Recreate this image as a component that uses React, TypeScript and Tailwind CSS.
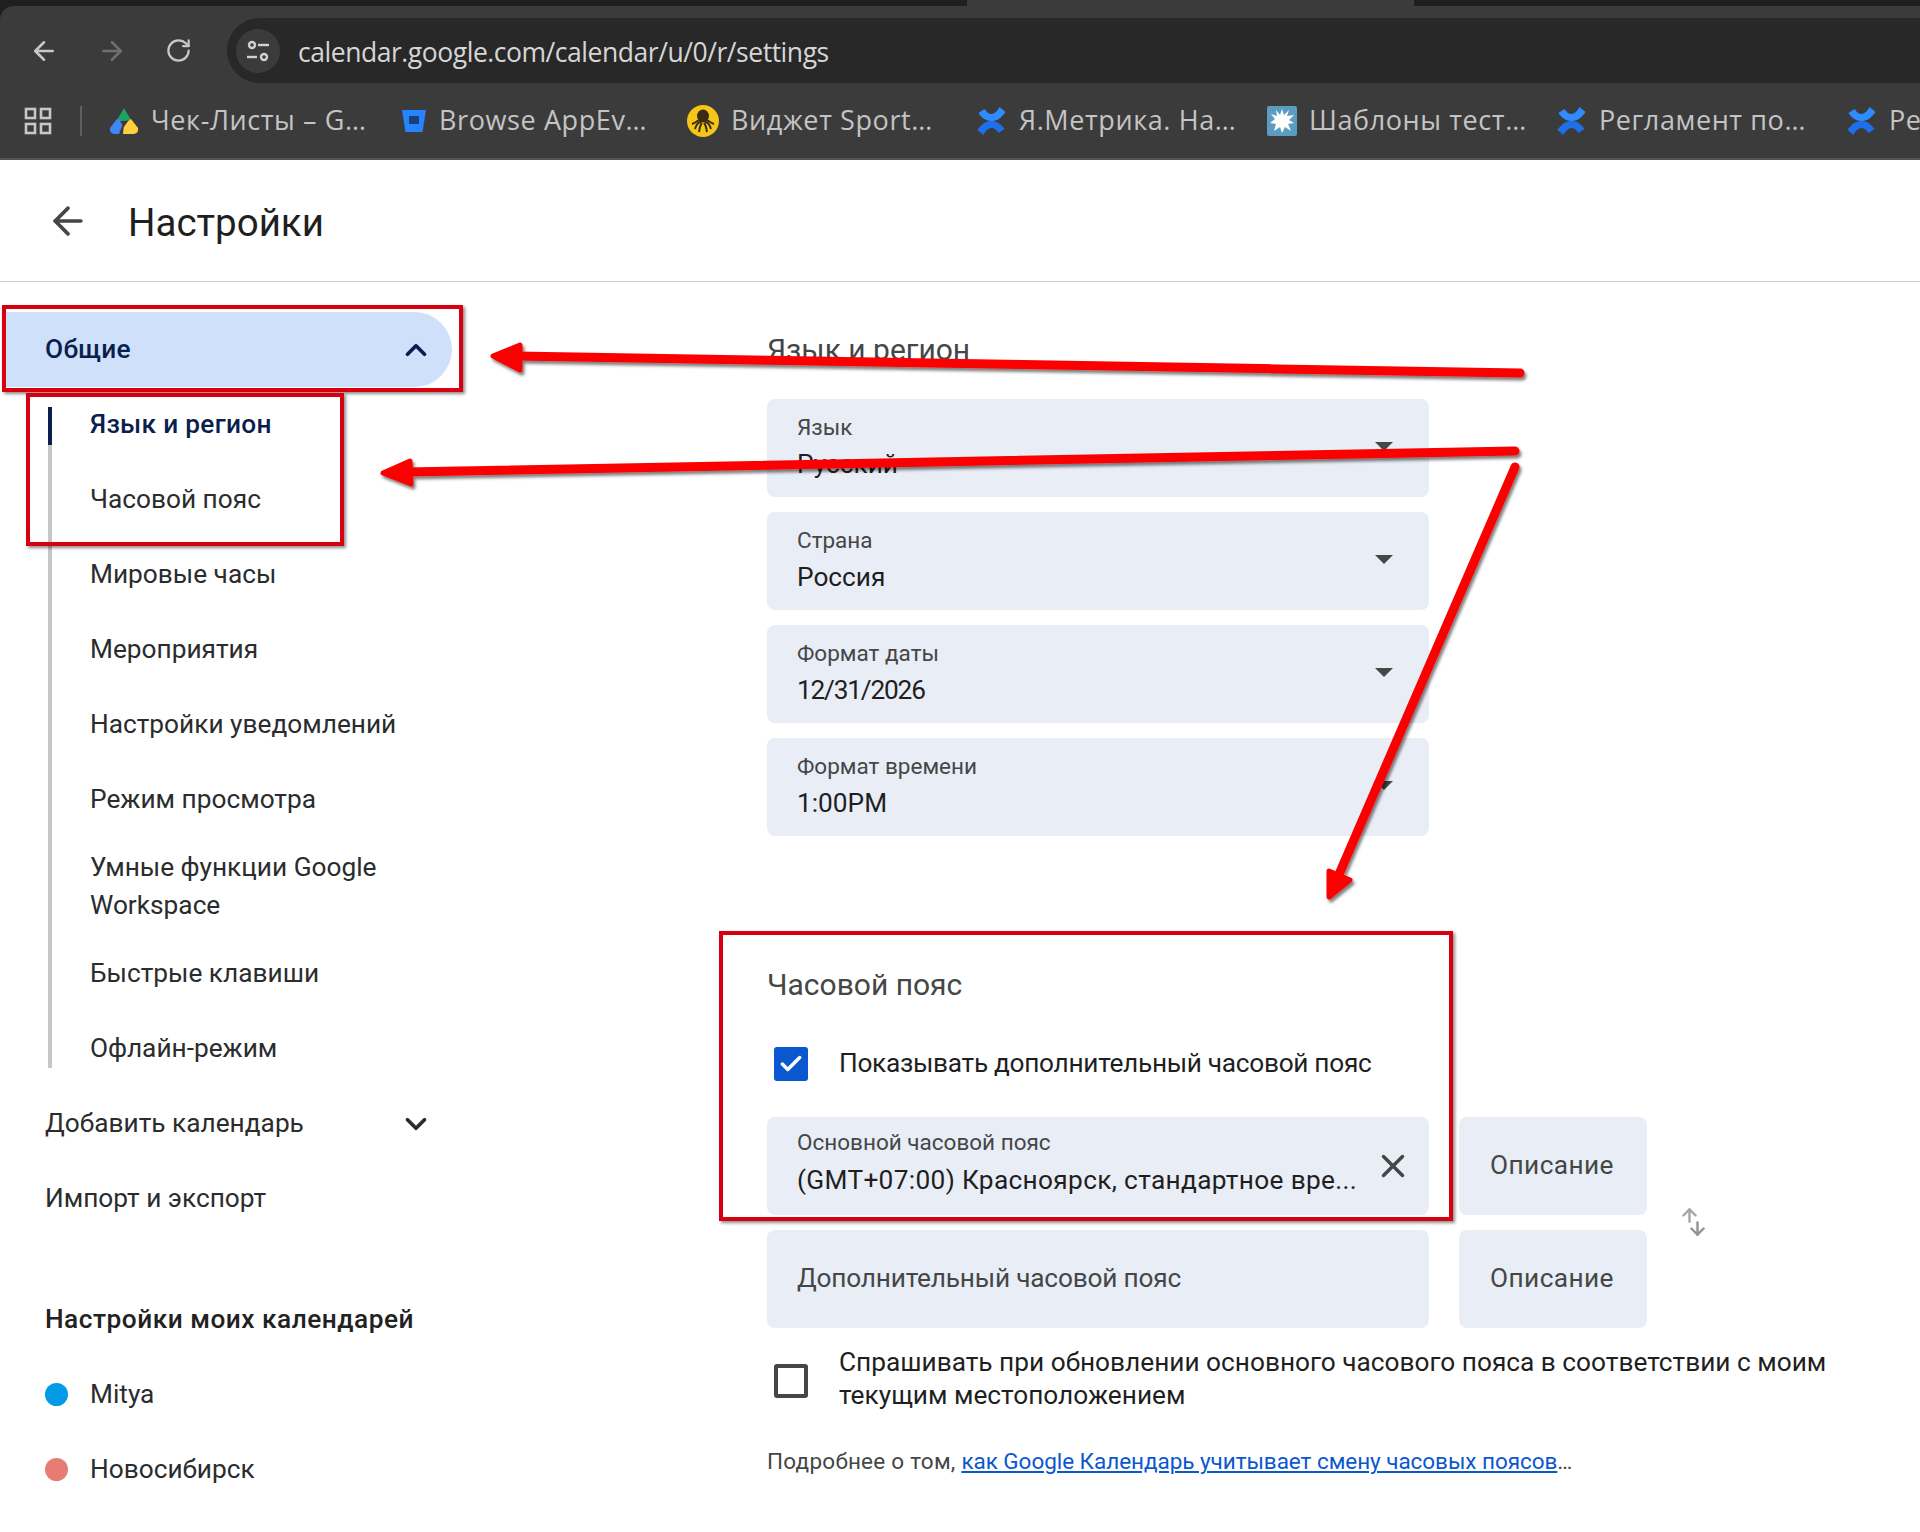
import React from "react";
import { ArrowLeft, ArrowRight, RotateCw, ChevronUp, ChevronDown, X, Check, ArrowUp, ArrowDown } from "lucide-react";

const UI = "font-['Roboto','Inter',sans-serif]";
const CH = "font-['Open_Sans','Noto_Sans',sans-serif]";

function Drive() {
  return (
    <svg width="30" height="28" viewBox="0 0 30 28" className="shrink-0">
      <path d="M15 1 L22 13 L15 14 L8 13 Z" fill="#1ea362" />
      <path d="M8 12 L15 14 L10 27 L5 27 Q0 26 1 21 Z" fill="#4285f4" />
      <path d="M22 12 L29 21 Q30 26 25 27 L14 27 L15 17 Z" fill="#ffcf3f" />
      <path d="M11 14 L19 14 L15 20 Z" fill="#3b3b3b" />
    </svg>
  );
}
function Bitbucket() {
  return (
    <svg width="26" height="24" viewBox="0 0 26 24" className="shrink-0">
      <path d="M1 1 H25 L21.5 23 H4.5 Z" fill="#2684ff" />
      <rect x="8" y="7" width="10" height="8" fill="#1b3f7a" />
    </svg>
  );
}
function Octopus() {
  return (
    <svg width="32" height="32" viewBox="0 0 32 32" className="shrink-0">
      <circle cx="16" cy="16" r="16" fill="#f5c518" />
      <ellipse cx="16" cy="11" rx="6" ry="6.5" fill="#3a2c12" />
      <path d="M8 24 Q10 17 14 17 M24 24 Q22 17 18 17 M12 27 Q13 20 15 18 M20 27 Q19 20 17 18 M5 19 Q8 18 12 15 M27 19 Q24 18 20 15" stroke="#3a2c12" strokeWidth="2" fill="none" />
    </svg>
  );
}
function Confluence() {
  return (
    <svg width="31" height="30" viewBox="0 0 30 30" className="shrink-0">
      <path d="M23 1 L29 6 C24 13 20 15 15 15 C8 15 4 10 2 7 L8 3 C10 6 12 8 15 8 C18 8 21 5 23 1 Z" fill="#2f8cff" />
      <path d="M7 29 L1 24 C6 17 10 15 15 15 C22 15 26 20 28 23 L22 27 C20 24 18 22 15 22 C12 22 9 25 7 29 Z" fill="#1f6fe8" />
    </svg>
  );
}
function Splash() {
  return (
    <svg width="30" height="30" viewBox="0 0 30 30" className="shrink-0">
      <rect width="30" height="30" rx="2" fill="#5b9cc0" />
      <path d="M15 3 L17 9 L22 4 L20 10 L27 9 L22 14 L27 17 L21 18 L24 25 L18 21 L15 27 L13 21 L7 25 L9 18 L3 17 L8 13 L4 8 L10 10 L9 4 L13 9 Z" fill="#ffffff" />
    </svg>
  );
}

const bookmarks: [React.ReactNode, string, string][] = [
  [<Drive />, "Чек-Листы – G…", "w-[292px]"],
  [<Bitbucket />, "Browse AppEv…", "w-[286px]"],
  [<Octopus />, "Виджет Sport…", "w-[289px]"],
  [<Confluence />, "Я.Метрика. На…", "w-[291px]"],
  [<Splash />, "Шаблоны тест…", "w-[289px]"],
  [<Confluence />, "Регламент по…", "w-[290px]"],
  [<Confluence />, "Ре", "w-[70px]"],
];

function BrowserChrome() {
  return (
    <div className="h-[160px] shrink-0 bg-[#1f1f1f] flex flex-col">
      <div className="h-[6px] shrink-0 flex">
        <div className="w-[967px]" />
        <div className="w-[447px] bg-[#3b3b3b]" />
      </div>
      <div className="flex-1 bg-[#3b3b3b] rounded-tl-[14px] flex flex-col border-b-2 border-[#555]">
        <div className="h-[65px] mt-[12px] flex items-center shrink-0">
          <ArrowLeft className="ml-[29px] text-[#c7c7c7]" size={30} strokeWidth={2} />
          <ArrowRight className="ml-[38px] text-[#6f6f6f]" size={30} strokeWidth={2} />
          <RotateCw className="ml-[38px] text-[#c7c7c7]" size={27} strokeWidth={2} />
          <div className="ml-[35px] flex-1 h-full bg-[#282828] rounded-l-[33px] flex items-center pl-[9px]">
            <div className="w-[44px] h-[44px] rounded-full bg-[#3b3b3b] flex items-center justify-center">
              <svg width="26" height="26" viewBox="0 0 26 26" fill="none" stroke="#d0d0d0" strokeWidth="2.4">
                <circle cx="7" cy="7" r="3" />
                <path d="M13 7 H24" />
                <path d="M2 19 H12" />
                <circle cx="19" cy="19" r="3" />
              </svg>
            </div>
            <span className={`ml-[18px] pt-[4px] text-[26.5px] tracking-[-0.46px] text-[#d6d6d6] ${CH}`}>calendar.google.com/calendar/u/0/r/settings</span>
          </div>
        </div>
        <div className="flex-1 flex items-center overflow-hidden">
          <svg width="28" height="28" viewBox="0 0 28 28" fill="none" stroke="#c7c7c7" strokeWidth="2.6" className="ml-[24px] shrink-0">
            <rect x="2" y="2" width="9" height="9" />
            <rect x="17" y="2" width="9" height="9" />
            <rect x="2" y="17" width="9" height="9" />
            <rect x="17" y="17" width="9" height="9" />
          </svg>
          <div className="ml-[28px] w-[2px] h-[30px] bg-[#5f5f5f] shrink-0" />
          <div className="ml-[27px] flex items-center">
            {bookmarks.map(([icon, label, w], i) => (
              <div key={i} className={`flex items-center gap-[12px] shrink-0 ${w}`}>
                {icon}
                <span className={`text-[27px] tracking-[0.6px] whitespace-nowrap text-[#c4c4c4] ${CH}`}>{label}</span>
              </div>
            ))}
          </div>
        </div>
      </div>
    </div>
  );
}

function NavSub({ children, active, tall }: { children: React.ReactNode; active?: boolean; tall?: boolean }) {
  return (
    <div className={`relative flex items-center pl-[42px] pr-[40px] text-[26.25px] leading-[37.5px] ${tall ? "h-[99px]" : "h-[75px]"} ${active ? "text-[#0a1f4e] font-medium tracking-[0.3px]" : "text-[#2a2c2e]"}`}>
      {children}
    </div>
  );
}

function Sidebar() {
  return (
    <aside className={`w-[767px] shrink-0 pr-[315px] pt-[30px] ${UI}`}>
      <div className="h-[75px] ml-[4px] rounded-r-[38px] bg-[#cfe0fb] flex items-center justify-between pl-[41px] pr-[19px] text-[26.25px] tracking-[0.3px] font-medium text-[#0a1f4e]">
        <span>Общие</span>
        <ChevronUp size={34} strokeWidth={2.6} />
      </div>
      <div className="ml-[48px] relative flex flex-col">
        <div className="absolute left-0 top-[20px] bottom-0 w-[4px] bg-[#c4c7c5]" />
        <div className="absolute left-0 top-[20px] w-[4px] h-[38px] bg-[#0a1f4e]" />
        <NavSub active>Язык и регион</NavSub>
        <NavSub>Часовой пояс</NavSub>
        <NavSub>Мировые часы</NavSub>
        <NavSub>Мероприятия</NavSub>
        <NavSub>Настройки уведомлений</NavSub>
        <NavSub>Режим просмотра</NavSub>
        <NavSub tall>Умные функции Google Workspace</NavSub>
        <NavSub>Быстрые клавиши</NavSub>
        <div className="-mb-[18px]"><NavSub>Офлайн-режим</NavSub></div>
      </div>
      <div className="h-[75px] mt-[18px] flex items-center justify-between pl-[45px] pr-[19px] text-[26.25px] text-[#2a2c2e]">
        <span>Добавить календарь</span>
        <ChevronDown size={34} strokeWidth={2.6} />
      </div>
      <div className="h-[75px] flex items-center pl-[45px] text-[26.25px] text-[#2a2c2e]">Импорт и экспорт</div>
      <div className="h-[75px] mt-[46px] flex items-center pl-[45px] text-[26.25px] tracking-[0.5px] font-medium text-[#222]">Настройки моих календарей</div>
      {[
        ["Mitya", "bg-[#039be5]"],
        ["Новосибирск", "bg-[#e67c73]"],
      ].map(([t, c]) => (
        <div key={t} className="h-[75px] flex items-center pl-[45px] text-[26.25px] text-[#2a2c2e]">
          <span className={`w-[23px] h-[23px] rounded-full ${c}`} />
          <span className="ml-[22px]">{t}</span>
        </div>
      ))}
    </aside>
  );
}

function Field({ label, value, tight }: { label: string; value: string; tight?: boolean }) {
  return (
    <div className="relative w-[662px] h-[98px] bg-[#e9edf6] rounded-[8px] pl-[30px] pr-[46px] pt-[13px]">
      <div className="text-[22.5px] leading-[30px] text-[#444746]">{label}</div>
      <div className={`mt-[3px] text-[26.25px] leading-[38px] text-[#1f1f1f] ${tight ? "tracking-[-1.2px]" : ""}`}>{value}</div>
      <div className="absolute right-[36px] top-[43px] w-0 h-0 border-x-[9px] border-x-transparent border-t-[9px] border-t-[#444746]" />
    </div>
  );
}

function Main() {
  return (
    <main className={`flex-1 ${UI}`}>
      <h2 className="mt-[49px] h-[38px] text-[30px] leading-[38px] text-[#444746]">Язык и регион</h2>
      <div className="mt-[30px] flex flex-col gap-[15px]">
        <Field label="Язык" value="Русский" />
        <Field label="Страна" value="Россия" />
        <Field label="Формат даты" value="12/31/2026" tight />
        <Field label="Формат времени" value="1:00PM" />
      </div>
      <h2 className="mt-[130px] h-[38px] text-[30px] leading-[38px] text-[#444746]">Часовой пояс</h2>
      <div className="mt-[40px] flex items-center text-[26.25px] tracking-[-0.3px] text-[#1f1f1f]">
        <div className="ml-[7px] w-[34px] h-[34px] rounded-[3px] bg-[#0b57d0] flex items-center justify-center">
          <Check className="text-white" size={26} strokeWidth={3.2} />
        </div>
        <span className="ml-[31px]">Показывать дополнительный часовой пояс</span>
      </div>
      <div className="relative mt-[34px] flex flex-col gap-[15px] w-[880px]">
        <div className="flex gap-[30px]">
          <div className="relative w-[662px] h-[98px] bg-[#e9edf6] rounded-[8px] pl-[30px] pr-[50px] pt-[10px]">
            <div className="text-[22.5px] leading-[30px] text-[#444746]">Основной часовой пояс</div>
            <div className="mt-[4px] text-[26.25px] leading-[38px] tracking-[0.33px] text-[#1f1f1f] whitespace-nowrap">(GMT+07:00) Красноярск, стандартное вре...</div>
            <X className="absolute right-[17px] top-[30px] text-[#444746]" size={38} strokeWidth={2.2} />
          </div>
          <div className="w-[188px] h-[98px] pb-[2px] pr-[2px] bg-[#e9edf6] rounded-[8px] flex items-center justify-center text-[26.25px] tracking-[0.4px] text-[#444746]">Описание</div>
        </div>
        <div className="flex gap-[30px]">
          <div className="w-[662px] h-[98px] pb-[2px] bg-[#e9edf6] rounded-[8px] pl-[30px] flex items-center text-[26.25px] tracking-[-0.2px] text-[#444746]">Дополнительный часовой пояс</div>
          <div className="w-[188px] h-[98px] pb-[2px] pr-[2px] bg-[#e9edf6] rounded-[8px] flex items-center justify-center text-[26.25px] tracking-[0.4px] text-[#444746]">Описание</div>
        </div>
        <div className="absolute left-[912px] top-[88px] w-[28px] h-[34px]">
          <ArrowUp className="absolute left-0 top-0 text-[#a6a6a6]" size={21} strokeWidth={2.8} />
          <ArrowDown className="absolute left-[8px] top-[13px] text-[#949494]" size={21} strokeWidth={2.8} />
        </div>
      </div>
      <div className="mt-[18px] flex items-center">
        <div className="ml-[7px] mt-[4px] w-[34px] h-[34px] rounded-[3px] border-[4px] border-[#444746] shrink-0" />
        <div className="ml-[31px] w-[1030px] text-[26.25px] leading-[33px] text-[#1f1f1f]">
          Спрашивать при обновлении основного часового пояса в соответствии с моим текущим местоположением
        </div>
      </div>
      <div className="mt-[34px] text-[22.5px] leading-[30px] text-[#444746]">
        <span className="tracking-[0.25px]">Подробнее о том, </span>
        <span className="text-[#0b57d0] underline tracking-[-0.05px]">как Google Календарь учитывает смену часовых поясов</span>…
      </div>
    </main>
  );
}

function Annotations() {
  const line = "#fb0000";
  return (
    <>
      <div className="absolute left-[2px] top-[305px] w-[461px] h-[87px] border-[4px] border-[#d8000f] shadow-[2px_2px_3px_rgba(0,0,0,0.45)]" />
      <div className="absolute left-[26px] top-[393px] w-[318px] h-[153px] border-[4px] border-[#d8000f] shadow-[2px_2px_3px_rgba(0,0,0,0.45)]" />
      <div className="absolute left-[719px] top-[931px] w-[734px] h-[290px] border-[4px] border-[#d8000f] shadow-[2px_2px_3px_rgba(0,0,0,0.45)]" />
      <svg className="absolute inset-0" width="1920" height="1532" viewBox="0 0 1920 1532" fill="none">
        <defs>
          <filter id="s" x="-5%" y="-5%" width="110%" height="110%">
            <feDropShadow dx="2" dy="3" stdDeviation="1.5" floodColor="#000" floodOpacity="0.5" />
          </filter>
        </defs>
        <g filter="url(#s)" stroke={line} strokeLinecap="round" strokeLinejoin="round">
          <path d="M1520 373 L516 356" strokeWidth="9" />
          <path d="M493 356 L520 345 L520 370 Z" fill={line} strokeWidth="5" />
          <path d="M1515 451 L406 472" strokeWidth="9" />
          <path d="M383 473 L410 461 L411 484 Z" fill={line} strokeWidth="5" />
          <path d="M1515 467 L1340 872" strokeWidth="9" />
          <path d="M1329 897 L1329 871 L1350 880 Z" fill={line} strokeWidth="5" />
        </g>
      </svg>
    </>
  );
}

export default function App() {
  return (
    <div className="relative w-[1920px] h-[1532px] overflow-hidden bg-white flex flex-col">
      <BrowserChrome />
      <header className={`h-[122px] shrink-0 border-b-[1.5px] border-[#cfcfcf] flex items-center ${UI}`}>
        <ArrowLeft className="ml-[46px] text-[#444746]" size={44} strokeWidth={2} />
        <h1 className="ml-[38px] mt-[4px] text-[38.5px] text-[#1f1f1f]">Настройки</h1>
      </header>
      <div className="flex flex-1 min-h-0">
        <Sidebar />
        <Main />
      </div>
      <Annotations />
    </div>
  );
}
